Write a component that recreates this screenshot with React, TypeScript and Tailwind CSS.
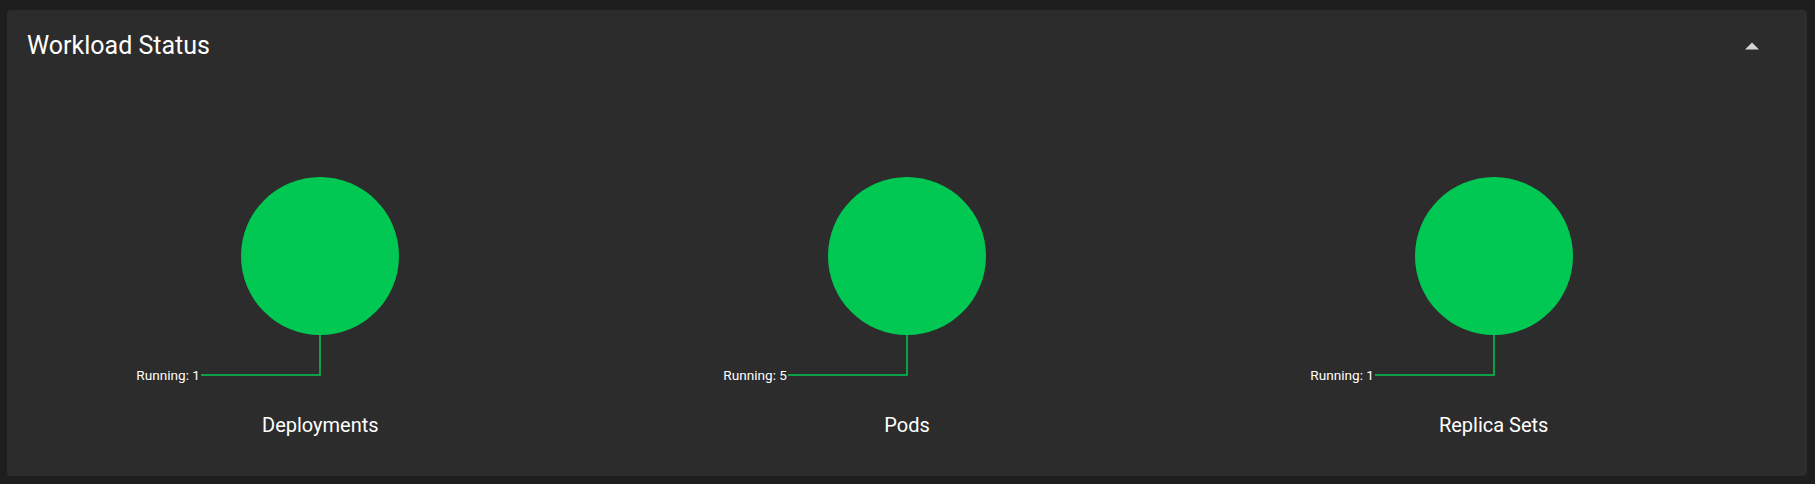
import React from 'react';

interface WorkloadItem {
  name: string;
  running: number;
}

const workloads: WorkloadItem[] = [
  { name: 'Deployments', running: 1 },
  { name: 'Pods', running: 5 },
  { name: 'Replica Sets', running: 1 },
];

const StatusPie: React.FC<{ item: WorkloadItem }> = ({ item }) => {
  // single-slice pie with a label leader line
  return (
    <div className="flex flex-col items-center">
      <svg width={400} height={250} viewBox="0 0 400 250" className="overflow-visible">
        <circle cx={200} cy={106} r={79} fill="#00c853" />
        <polyline
          points="200,185 200,225 81,225"
          fill="none"
          stroke="#00c853"
          strokeWidth={1.5}
        />
        <text
          x={80}
          y={230}
          textAnchor="end"
          fontSize={13.6}
          fill="#ffffff"
          fontFamily="Roboto, sans-serif"
        >
          Running: {item.running}
        </text>
      </svg>
      <div className="mt-[11px] text-xl leading-7 text-white">{item.name}</div>
    </div>
  );
};

export default function App() {
  return (
    <div className="min-h-[484px] bg-[#1e1e1e] pt-[10px] pl-[7px] font-['Roboto',sans-serif]">
      <div className="h-[466px] w-[1800px] rounded bg-[#2c2c2c] px-5 pt-5">
        <div className="flex items-center justify-between">
          <h2 className="text-[25px] leading-8 text-white">Workload Status</h2>
          <button className="mr-[19px] flex h-8 w-8 items-center justify-center">
            <svg width={14} height={8} viewBox="0 0 14 8">
              <polygon points="0,7.5 7,0.5 14,7.5" fill="#d4d4d4" />
            </svg>
          </button>
        </div>
        <div className="mt-[88px] grid grid-cols-3">
          {workloads.map((w) => (
            <StatusPie key={w.name} item={w} />
          ))}
        </div>
      </div>
    </div>
  );
}
